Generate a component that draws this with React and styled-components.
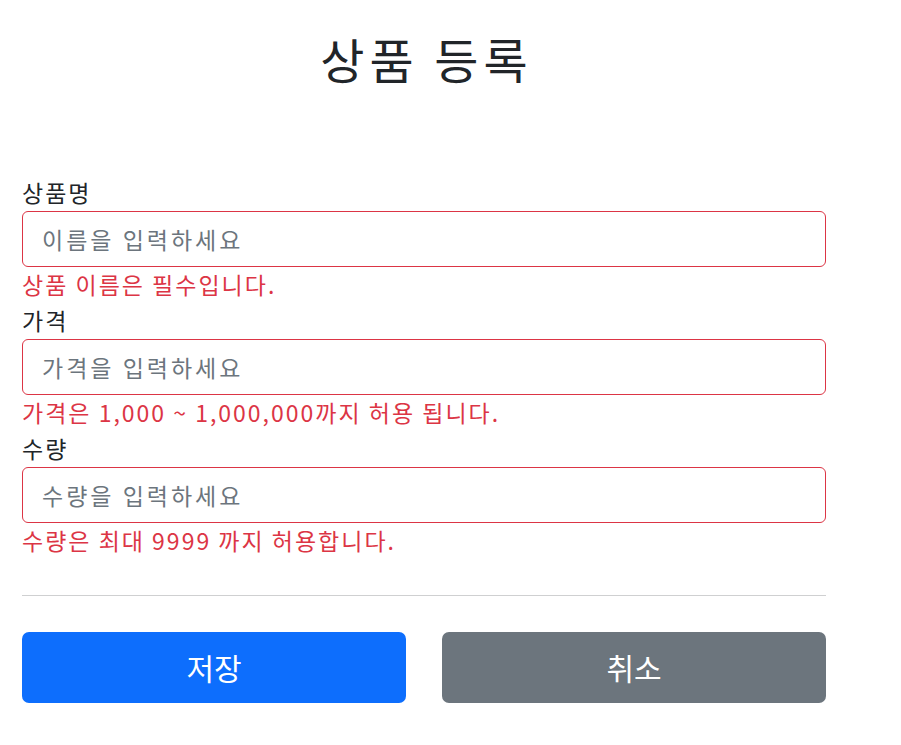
import React from "react";
import styled, { createGlobalStyle } from "styled-components";

const GlobalStyle = createGlobalStyle`
    * {
        box-sizing: border-box;
    }
    body {
        margin: 0;
        background: #fff;
        color: #212529;
        font-family: "Noto Sans CJK KR", "Noto Sans", sans-serif;
    }
`;

const fields = [
    { id: "itemName", label: "상품명", placeholder: "이름을 입력하세요", error: "상품 이름은 필수입니다." },
    { id: "price", label: "가격", placeholder: "가격을 입력하세요", error: "가격은 1,000 ~ 1,000,000까지 허용 됩니다." },
    { id: "quantity", label: "수량", placeholder: "수량을 입력하세요", error: "수량은 최대 9999 까지 허용합니다." },
];

const App = () => {
    return (
        <>
            <GlobalStyle />
            <Container>
                <Header>
                    <h2>상품 등록</h2>
                </Header>
                <Form onSubmit={(e) => e.preventDefault()}>
                    {fields.map((f) => (
                        <Field key={f.id}>
                            <Label htmlFor={f.id}>{f.label}</Label>
                            <Input id={f.id} type="text" placeholder={f.placeholder} $invalid />
                            <Feedback>{f.error}</Feedback>
                        </Field>
                    ))}
                    <Divider />
                    <Buttons>
                        <Button type="submit" $variant="primary">저장</Button>
                        <Button type="button" $variant="secondary">취소</Button>
                    </Buttons>
                </Form>
            </Container>
        </>
    );
};

export default App;

const Container = styled.div`
    width: 804px;
    margin: 0 22px;
`;
const Header = styled.div`
    padding-top: 30px;
    text-align: center;
    h2 {
        margin: 0;
        padding-left: 5px;
        font-size: 48px;
        font-weight: 400;
        letter-spacing: 5px;
        line-height: 1.2;
        color: #212529;
    }
`;
const Form = styled.form`
    margin-top: 83px;
`;
const Field = styled.div`
    display: flex;
    flex-direction: column;
`;
const Label = styled.label`
    margin: 4px 0 2px;
    font-size: 23px;
    line-height: 34px;
    letter-spacing: 2px;
    color: #212529;
`;
const Input = styled.input`
    height: 56px;
    padding: 0 19px;
    font-family: inherit;
    font-size: 23px;
    letter-spacing: 3px;
    color: #212529;
    border: 1px solid ${(p) => (p.$invalid ? "#dc3545" : "#ced4da")};
    border-radius: 6px;
    outline: none;
    &::placeholder {
        color: #6c757d;
    }
`;
const Feedback = styled.div`
    margin-top: 2px;
    font-size: 23px;
    line-height: 30px;
    letter-spacing: 2px;
    color: #dc3545;
`;
const Divider = styled.hr`
    margin: 40px 0 36px;
    border: 0;
    border-top: 1px solid #cfd0d1;
`;
const Buttons = styled.div`
    display: grid;
    grid-template-columns: 1fr 1fr;
    gap: 36px;
`;
const Button = styled.button`
    height: 71px;
    border: 0;
    border-radius: 7px;
    font-family: inherit;
    font-size: 30px;
    color: #fff;
    background: ${(p) => (p.$variant === "primary" ? "#0d6efd" : "#6c757d")};
    cursor: pointer;
`;
